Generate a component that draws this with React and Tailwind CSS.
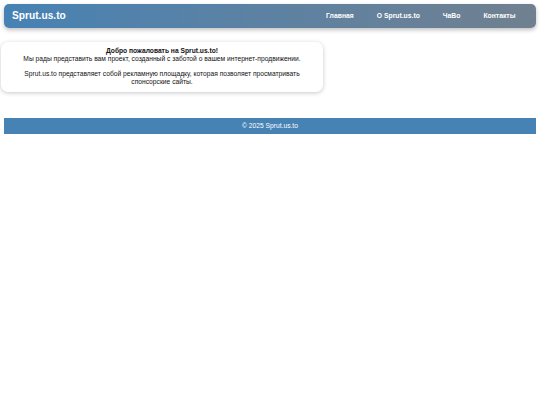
export default function App() {
  const links = ['Главная', 'О Sprut.us.to', 'ЧаВо', 'Контакты']

  return (
    <div className="min-h-[405px] bg-white font-['Liberation_Sans',Arial,sans-serif] pt-[4px]">
      <header className="mx-[4px] flex h-[24px] items-center justify-between rounded-[5px] bg-gradient-to-r from-[#4682b4] to-[#708090] pl-[8px] pr-[9px] shadow-[0_2px_4px_rgba(0,0,0,0.25)]">
        <span className="text-[10.2px] font-bold leading-none text-white">Sprut.us.to</span>
        <nav className="flex items-center">
          {links.map((l) => (
            <a key={l} className="px-[11.5px] text-[6.8px] font-bold leading-none text-white">
              {l}
            </a>
          ))}
        </nav>
      </header>

      <main className="mt-[14px] w-[322px] ml-[1px] rounded-[7px] bg-white px-[8px] pt-[5px] pb-[6px] text-center text-[6.7px] leading-[8px] text-[#111] shadow-[0_1px_4px_rgba(0,0,0,0.22)]">
        <p>
          <strong>Добро пожаловать на Sprut.us.to!</strong>
          <br />
          Мы рады представить вам проект, созданный с заботой о вашем интернет-продвижении.
        </p>
        <p className="mt-[7px]">
          Sprut.us.to представляет собой рекламную площадку, которая позволяет просматривать спонсорские сайты.
        </p>
      </main>

      <footer className="mx-[4px] mt-[26px] flex h-[16px] items-center justify-center bg-[#4682b4] text-[6.7px] leading-none text-white">
        © 2025 Sprut.us.to
      </footer>
    </div>
  )
}
